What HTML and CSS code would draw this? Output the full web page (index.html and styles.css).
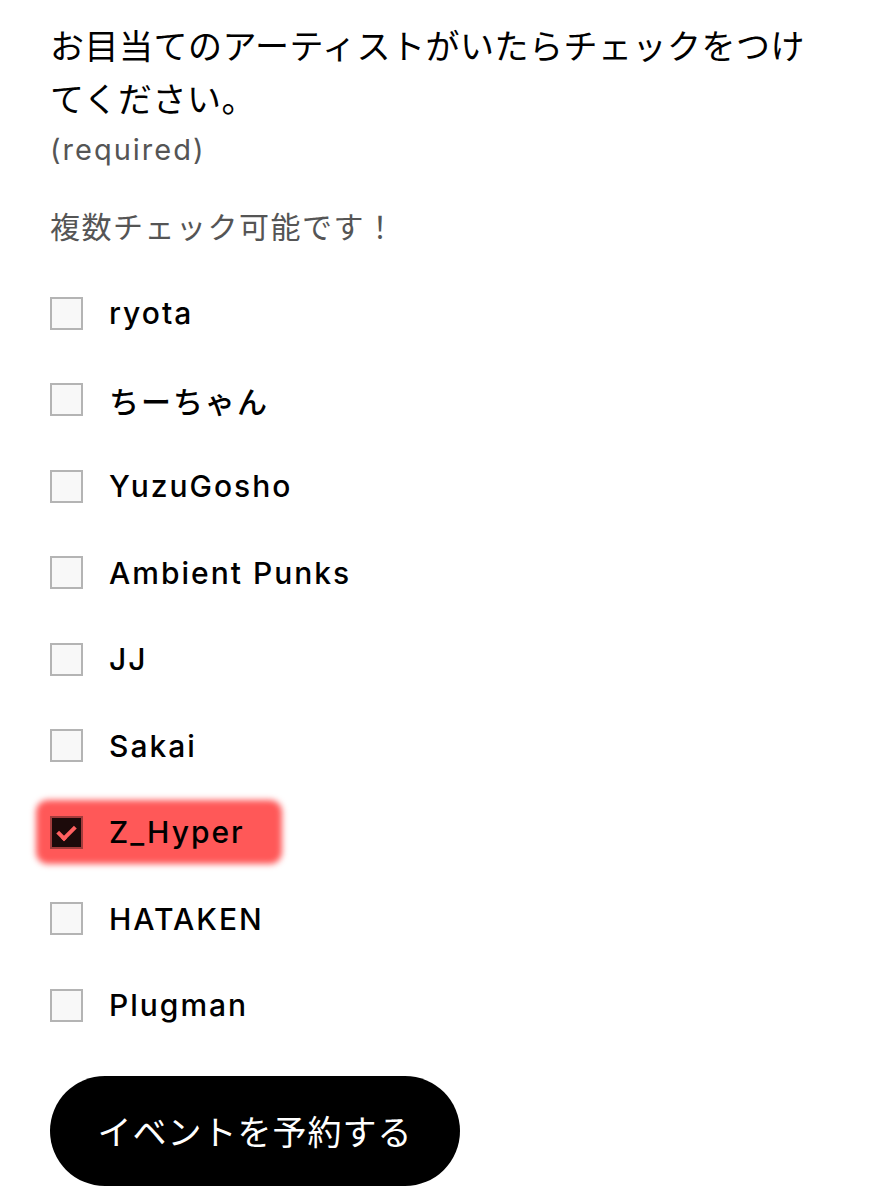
FILE: index.html
```html
<!DOCTYPE html>
<html>
<head>
    <title>イベント予約</title>
    <meta charset="UTF-8">
    <link rel="stylesheet" href="styles.css">
</head>
<body>

<form class="booking">
    <fieldset class="field">
        <legend class="question">お目当てのアーティストがいたらチェックをつけてください。</legend>
        <div class="required">(required)</div>
        <p class="note">複数チェック可能です！</p>

        <div class="options">
            <label class="option"><input type="checkbox"><span class="box"></span><span class="name">ryota</span></label>
            <label class="option"><input type="checkbox"><span class="box"></span><span class="name">ちーちゃん</span></label>
            <label class="option"><input type="checkbox"><span class="box"></span><span class="name">YuzuGosho</span></label>
            <label class="option"><input type="checkbox"><span class="box"></span><span class="name">Ambient Punks</span></label>
            <label class="option"><input type="checkbox"><span class="box"></span><span class="name">JJ</span></label>
            <label class="option"><input type="checkbox"><span class="box"></span><span class="name">Sakai</span></label>
            <label class="option marked"><input type="checkbox" checked><span class="box"></span><span class="name">Z_Hyper</span></label>
            <label class="option"><input type="checkbox"><span class="box"></span><span class="name">HATAKEN</span></label>
            <label class="option"><input type="checkbox"><span class="box"></span><span class="name">Plugman</span></label>
        </div>
    </fieldset>

    <button type="button" class="submit">イベントを予約する</button>
</form>

</body>
</html>
```

FILE: styles.css
```css
body {
    margin: 0;
    background: #fff;
    color: #000;
    font-family: Inter, "Noto Sans CJK JP", sans-serif;
}

.booking {
    padding: 18px 50px 0 50px;
}

.field {
    border: 0;
    margin: 0;
    padding: 0;
}

.question {
    padding: 0;
    font-family: "Noto Sans CJK JP", sans-serif;
    font-size: 34px;
    line-height: 53px;
    letter-spacing: 0.5px;
}

.required {
    margin-top: 6px;
    font-size: 29px;
    line-height: 40px;
    letter-spacing: 2px;
    color: #555;
}

.note {
    margin: 35px 0 0 0;
    font-family: "Noto Sans CJK JP", sans-serif;
    font-size: 30px;
    line-height: 40px;
    color: #555;
    letter-spacing: 1.5px;
}

.options {
    margin-top: 25px;
    display: flex;
    flex-direction: column;
}

.option {
    position: relative;
    display: flex;
    align-items: center;
    gap: 26px;
    height: 86.5px;
}

.option input {
    display: none;
}

.box {
    position: relative;
    z-index: 1;
    box-sizing: border-box;
    width: 33px;
    height: 33px;
    border: 2px solid #b4b4b4;
    background: #f8f8f8;
}

.option input:checked + .box {
    background: #1c0a0a;
    border-color: #a23c3c;
}

.option input:checked + .box::after {
    content: "";
    position: absolute;
    left: 9px;
    top: 4px;
    width: 7px;
    height: 14px;
    border: solid #ff6060;
    border-width: 0 4px 4px 0;
    transform: rotate(45deg);
}

.name {
    position: relative;
    z-index: 1;
    font-size: 30px;
    font-weight: 500;
    letter-spacing: 2px;
}

.marked::before {
    content: "";
    position: absolute;
    left: -14px;
    top: 11px;
    width: 246px;
    height: 64px;
    border-radius: 12px;
    background: #ff5858;
    filter: blur(3px);
}

.submit {
    margin-top: 27px;
    width: 410px;
    height: 110px;
    border: 0;
    border-radius: 55px;
    background: #000;
    color: #fff;
    font-family: "Noto Sans CJK JP", sans-serif;
    font-size: 34px;
    letter-spacing: 1px;
}
```
